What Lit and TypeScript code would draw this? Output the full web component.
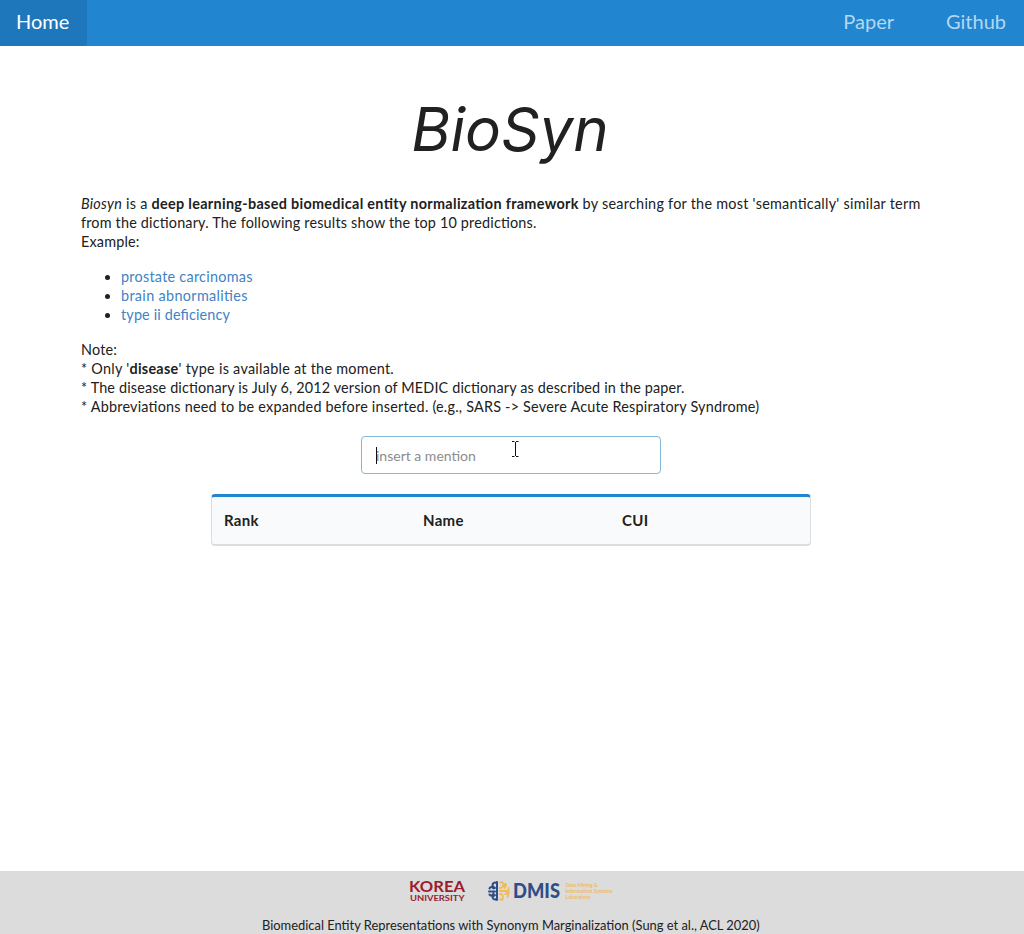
import { LitElement, html, css } from "lit";
import { customElement } from "lit/decorators.js";

@customElement("dmis-logo")
class DmisLogo extends LitElement {
  static styles = css`
    :host { display: block; width: 128px; height: 25px; }
    svg { display: block; overflow: visible; }
    .word { font: 900 20px Lato, sans-serif; fill: #2f4d87; }
    .small { font: 700 5px Lato, sans-serif; fill: #eebb62; }
  `;
  render() {
    return html`<svg width="128" height="25" viewBox="0 0 128 25">
      <g fill="none" stroke="#2f4d87" stroke-width="2" stroke-linecap="round">
        <path d="M9 3v18M8.500 4C6.500 3 4.500 4 4.500 6.500M8.500 20c-2 1-4 0-4-2M4.500 7l2.500 2M1.500 9.500c1-2 2.500-2 4 0M1 12.500H7M1.500 15.500c1 2 3 1 4-1M4.500 18l2.500-2" />
      </g>
      <g fill="none" stroke="#f0bc55" stroke-width="1.800" stroke-linecap="round">
        <path d="M12 3.500c3-1 4 1 3 3M12 9c2 0 3-1 3-2.500M18 6l-1.500 3M12 12h5c3 0 4-1 3.500-3M12 15c3 0 3 2 3 5M12 20c1 1 2 1 3 0M17 15c3-1 4 1 2.500 3" />
        <circle cx="17" cy="6" r="1" /><circle cx="20" cy="13.500" r="1" />
      </g>
      <text class="word" x="25" y="19" textLength="47" lengthAdjust="spacingAndGlyphs">DMIS</text>
      <text class="small" x="77.500" y="7.500" textLength="32">Data Mining &amp;</text>
      <text class="small" x="77.500" y="13.700" textLength="47" lengthAdjust="spacingAndGlyphs">Information Systems</text>
      <text class="small" x="77.500" y="20" textLength="25">Laboratory</text>
    </svg>`;
  }
}

@customElement("app-root")
class AppRoot extends LitElement {
  static styles = css`
    :host { display: flex; flex-direction: column; height: 934px; background: #fff; color: #212121; font: 14.4px/19px Lato, sans-serif; overflow: hidden; }
    * { box-sizing: border-box; }
    nav { display: flex; height: 46px; background: #2185d0; font-size: 20px; line-height: 42px; color: #b4d7f1; }
    .item { padding: 0 16px; }
    .active { width: 87px; background: #1f77bb; color: #fff; border-radius: 0 0 3px 0; }
    .right { margin-left: auto; display: flex; padding-right: 2px; gap: 20px; }
    h1 { margin: 45px 0 0; height: 103px; text-align: center; font: italic 400 60px/76px Inter, sans-serif; padding-right: 4px; }
    main { flex: 1; }
    .copy { padding-left: 81px; white-space: nowrap; font-feature-settings: "liga" 1; letter-spacing: 0.185px; line-height: 19px; }
    .intro { letter-spacing: 0.26px; }
    .intro b { letter-spacing: 0.315px; }
    .first { letter-spacing: 0.26px; }
    .second { letter-spacing: 0.34px; }
    .third { letter-spacing: 0.15px; }
    .only { letter-spacing: 0.27px; }
    .medic { letter-spacing: 0.15px; }
    .abbr { letter-spacing: 0.215px; }
    ul { margin: 16px 0; padding: 0 0 0 40px; }
    li::marker { color: #212121; }
    a { color: #4183c4; }
    .field { position: relative; margin: 20px auto 0 361px; width: 300px; height: 38px; border: 1px solid #85b7d9; border-radius: 4px; padding: 0 14px; line-height: 38px; font-size: 14px; color: #8c8c8c; }
    .caret { position: absolute; left: 14px; top: 10px; width: 1px; height: 17px; background: #111; }
    .pointer { position: absolute; left: 149px; top: 4px; }
    .table { margin: 20px 0 0 211px; width: 600px; height: 52px; border: 1px solid #dcdddd; border-top: 3px solid #2185d0; border-bottom: 2px solid #dcdddd; border-radius: 4px; background: #f9fafb; display: grid; grid-template-columns: 199px 199px 1fr; padding-left: 12px; font-weight: 700; font-size: 15px; line-height: 46px; letter-spacing: 0.3px; }
    footer { height: 63px; background: #dcdcdc; }
    .logos { display: flex; height: 43px; padding: 8px 0 0 409px; gap: 21px; }
    .korea { display: block; width: 58px; height: 25px; fill: #9b1b30; overflow: visible; }
    .k1 { font: 700 15.500px Lato, sans-serif; }
    .k2 { font: 700 8px Lato, sans-serif; }
    .cite { padding-left: 262px; font-size: 12.9px; line-height: 23px; white-space: nowrap; }
  `;
  render() {
    return html`
      <nav><div class="item active">Home</div><div class="right"><div class="item">Paper</div><div class="item">Github</div></div></nav>
      <main>
        <h1>BioSyn</h1>
        <div class="copy">
          <div class="intro"><i>Biosyn</i> is a <b>deep learning-based biomedical entity normalization framework</b> by searching for the most 'semantically' similar term</div>
          <div>from the dictionary. The following results show the top 10 predictions.</div>
          <div>Example:</div>
          <ul><li class="first"><a>prostate carcinomas</a></li><li class="second"><a>brain abnormalities</a></li><li class="third"><a>type ii deficiency</a></li></ul>
          <div>Note:</div>
          <div class="only">* Only '<b>disease</b>' type is available at the moment.</div>
          <div class="medic">* The disease dictionary is July 6, 2012 version of MEDIC dictionary as described in the paper.</div>
          <div class="abbr">* Abbreviations need to be expanded before inserted. (e.g., SARS -&gt; Severe Acute Respiratory Syndrome)</div>
        </div>
        <div class="field">insert a mention<span class="caret"></span>
          <svg class="pointer" width="9" height="17" viewBox="0 0 9 17"><path d="M1 .5h2.500M5 .5h2.500M4.500 1v14M1 15.500h2.500M5 15.500h2.500" fill="none" stroke="#111" /></svg>
        </div>
        <div class="table"><span>Rank</span><span>Name</span><span>CUI</span></div>
      </main>
      <footer>
        <div class="logos">
          <svg class="korea" width="58" height="25" viewBox="0 0 58 25">
            <text class="k1" x="0" y="13" textLength="56" lengthAdjust="spacingAndGlyphs">KOREA</text>
            <text class="k2" x="1" y="22.300" textLength="54.500" lengthAdjust="spacingAndGlyphs">UNIVERSITY</text>
          </svg>
          <dmis-logo></dmis-logo>
        </div>
        <div class="cite">Biomedical Entity Representations with Synonym Marginalization (Sung et al., ACL 2020)</div>
      </footer>`;
  }
}
